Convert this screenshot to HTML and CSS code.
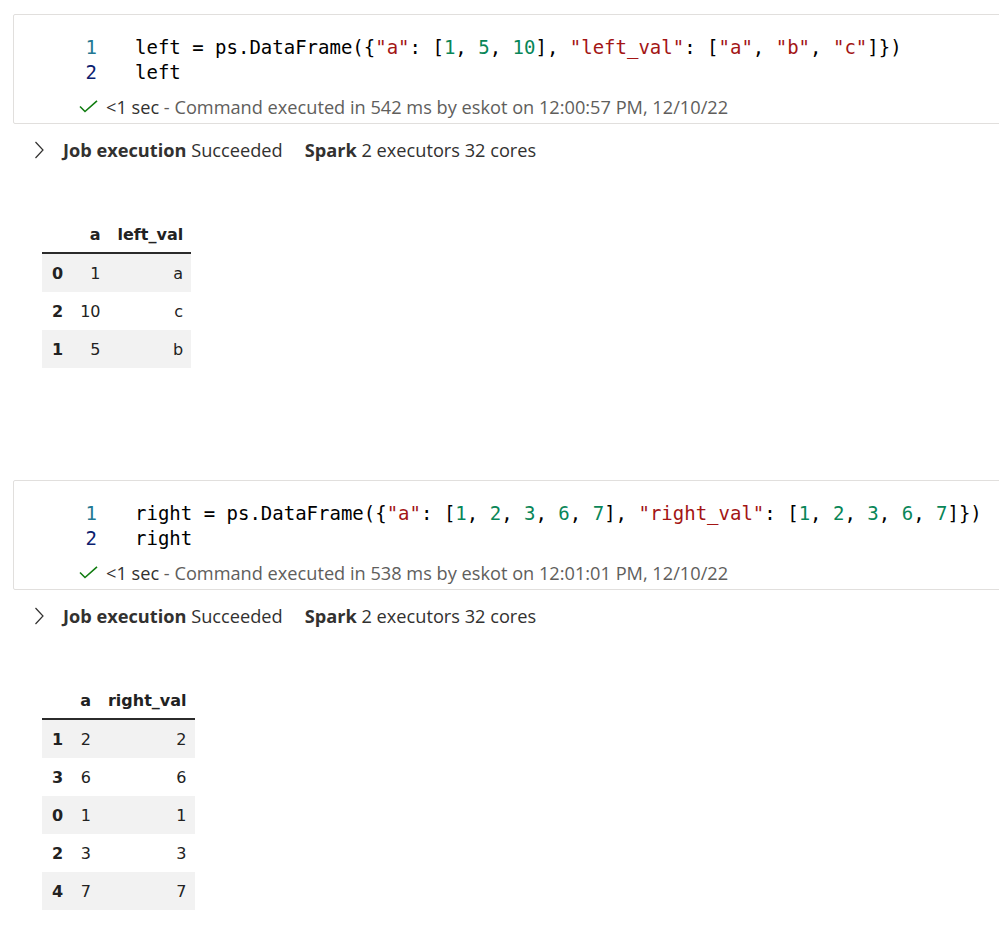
FILE: index.html
```html
<!DOCTYPE html>
<html>
<head>
<meta charset="utf-8">
<link rel="stylesheet" href="styles.css">
</head>
<body>
<div class="page">
  <section class="cell cell-first">
    <div class="code">
      <div class="ln">1</div>
      <div class="src">left = ps.DataFrame({<span class="s">"a"</span>: [<span class="n">1</span>, <span class="n">5</span>, <span class="n">10</span>], <span class="s">"left_val"</span>: [<span class="s">"a"</span>, <span class="s">"b"</span>, <span class="s">"c"</span>]})</div>
      <div class="ln active">2</div>
      <div class="src">left</div>
    </div>
    <div class="status">
      <svg class="check" width="19" height="13" viewBox="0 0 19 13"><polyline points="1,6.5 6,11.5 18,0.8" fill="none" stroke="#107c10" stroke-width="1.6"/></svg>
      <span class="dur">&lt;1 sec</span><span class="msg">&nbsp;- Command executed in 542 ms by eskot on 12:00:57 PM, 12/10/22</span>
    </div>
  </section>
  <div class="job">
    <svg class="chev" width="10" height="18" viewBox="0 0 10 18"><polyline points="1.5,1 9,9 1.5,17" fill="none" stroke="#323130" stroke-width="1.2"/></svg>
    <span class="job-text"><b>Job execution</b> Succeeded</span>
    <span class="job-text spark"><b>Spark</b> 2 executors 32 cores</span>
  </div>
  <div class="output">
    <table class="df">
      <thead><tr><th></th><th>a</th><th>left_val</th></tr></thead>
      <tbody>
        <tr><th>0</th><td>1</td><td>a</td></tr>
        <tr><th>2</th><td>10</td><td>c</td></tr>
        <tr><th>1</th><td>5</td><td>b</td></tr>
      </tbody>
    </table>
  </div>

  <section class="cell cell-second">
    <div class="code">
      <div class="ln">1</div>
      <div class="src">right = ps.DataFrame({<span class="s">"a"</span>: [<span class="n">1</span>, <span class="n">2</span>, <span class="n">3</span>, <span class="n">6</span>, <span class="n">7</span>], <span class="s">"right_val"</span>: [<span class="n">1</span>, <span class="n">2</span>, <span class="n">3</span>, <span class="n">6</span>, <span class="n">7</span>]})</div>
      <div class="ln active">2</div>
      <div class="src">right</div>
    </div>
    <div class="status">
      <svg class="check" width="19" height="13" viewBox="0 0 19 13"><polyline points="1,6.5 6,11.5 18,0.8" fill="none" stroke="#107c10" stroke-width="1.6"/></svg>
      <span class="dur">&lt;1 sec</span><span class="msg">&nbsp;- Command executed in 538 ms by eskot on 12:01:01 PM, 12/10/22</span>
    </div>
  </section>
  <div class="job">
    <svg class="chev" width="10" height="18" viewBox="0 0 10 18"><polyline points="1.5,1 9,9 1.5,17" fill="none" stroke="#323130" stroke-width="1.2"/></svg>
    <span class="job-text"><b>Job execution</b> Succeeded</span>
    <span class="job-text spark"><b>Spark</b> 2 executors 32 cores</span>
  </div>
  <div class="output">
    <table class="df">
      <thead><tr><th></th><th>a</th><th>right_val</th></tr></thead>
      <tbody>
        <tr><th>1</th><td>2</td><td>2</td></tr>
        <tr><th>3</th><td>6</td><td>6</td></tr>
        <tr><th>0</th><td>1</td><td>1</td></tr>
        <tr><th>2</th><td>3</td><td>3</td></tr>
        <tr><th>4</th><td>7</td><td>7</td></tr>
      </tbody>
    </table>
  </div>
</div>
</body>
</html>
```

FILE: styles.css
```css
html, body {
  margin: 0;
  padding: 0;
  background: #ffffff;
  overflow: hidden;
}
.page {
  width: 999px;
  font-family: "Open Sans", "Noto Sans", sans-serif;
  color: #323130;
}
.cell {
  margin-left: 13px;
  width: 1000px;
  border: 1px solid #e1dfdd;
  border-radius: 2px;
  box-sizing: border-box;
  padding: 20px 0 4px 0;
}
.cell-first { margin-top: 14px; }
.cell-second { margin-top: 112px; }
.code {
  display: grid;
  grid-template-columns: 83px 1fr;
  column-gap: 38px;
  font-family: "DejaVu Sans Mono", monospace;
  font-size: 19px;
  line-height: 25px;
  color: #000000;
}
.ln {
  text-align: right;
  color: #237893;
}
.ln.active { color: #0b216f; }
.src { white-space: pre; }
.s { color: #a31515; }
.n { color: #098658; }
.status {
  display: flex;
  align-items: center;
  margin-top: 10px;
  height: 24px;
  padding-left: 65px;
  font-size: 18.2px;
  white-space: pre;
}
.check { margin-right: 8px; margin-top: -2px; flex: none; }
.dur { color: #323130; }
.msg { color: #605e5c; }
.job {
  display: flex;
  align-items: center;
  height: 24px;
  margin-top: 14px;
  padding-left: 34px;
  font-size: 18.2px;
  white-space: pre;
}
.job b { font-weight: 700; }
.chev { margin-right: 19px; flex: none; }
.spark { margin-left: 22px; }
.output {
  margin-top: 54px;
  padding-left: 42px;
}
.df {
  border-collapse: collapse;
  font-family: "DejaVu Sans", Verdana, sans-serif;
  font-size: 16px;
  color: #222;
}
.df th, .df td {
  padding: 0 8px 0 9px;
  text-align: right;
  height: 38px;
}
.df thead th {
  font-weight: 700;
  border-bottom: 2px solid #2b2b2b;
  vertical-align: middle;
  height: 36px;
}
.df tbody th {
  font-weight: 700;
  padding-left: 10px;
}
.df tbody tr:nth-child(odd) { background: #f2f2f2; }
```
